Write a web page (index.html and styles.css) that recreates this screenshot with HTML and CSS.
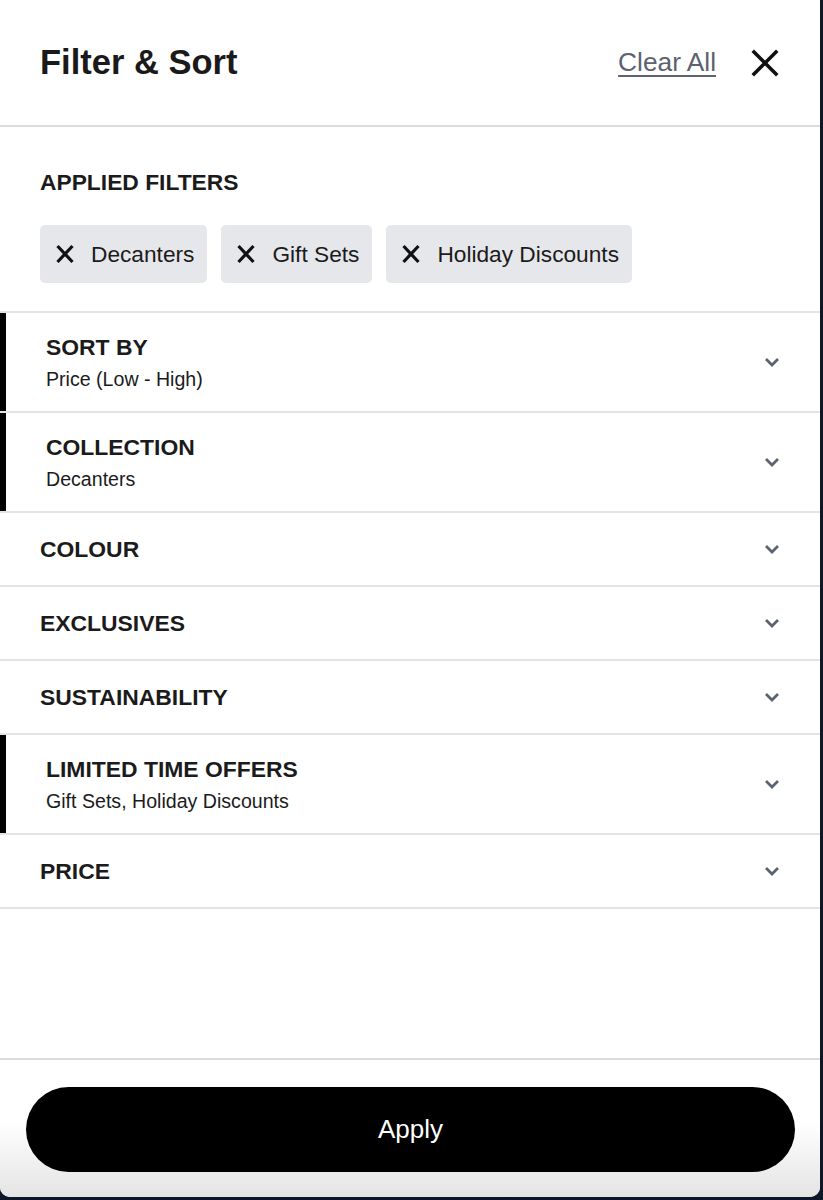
FILE: index.html
```html
<!DOCTYPE html>
<html lang="en">
<head>
    <meta charset="UTF-8">
    <meta name="viewport" content="width=device-width, initial-scale=1.0">
    <title>Filter &amp; Sort</title>
    <link rel="stylesheet" href="styles.css">
</head>
<body>
    <div class="panel">
        <header class="panel-header">
            <h1>Filter &amp; Sort</h1>
            <div class="header-actions">
                <a href="#" class="clear-all">Clear All</a>
                <button class="close-btn" aria-label="Close">
                    <svg width="28" height="28" viewBox="0 0 28 28">
                        <path d="M3 3 L25 25 M25 3 L3 25" stroke="#111" stroke-width="3.6" stroke-linecap="square" fill="none"/>
                    </svg>
                </button>
            </div>
        </header>

        <section class="applied">
            <h2>APPLIED FILTERS</h2>
            <div class="chips">
                <!-- Applied filter chips -->
                <button class="chip">
                    <svg width="20" height="20" viewBox="0 0 20 20"><path d="M2.5 2 L17.5 18 M17.5 2 L2.5 18" stroke="#111" stroke-width="3.2" fill="none"/></svg>
                    Decanters
                </button>
                <button class="chip">
                    <svg width="20" height="20" viewBox="0 0 20 20"><path d="M2.5 2 L17.5 18 M17.5 2 L2.5 18" stroke="#111" stroke-width="3.2" fill="none"/></svg>
                    Gift Sets
                </button>
                <button class="chip">
                    <svg width="20" height="20" viewBox="0 0 20 20"><path d="M2.5 2 L17.5 18 M17.5 2 L2.5 18" stroke="#111" stroke-width="3.2" fill="none"/></svg>
                    Holiday Discounts
                </button>
            </div>
        </section>

        <ul class="filter-list">
            <li class="filter-row active">
                <div class="filter-text">
                    <div class="filter-title">SORT BY</div>
                    <div class="filter-value">Price (Low - High)</div>
                </div>
                <svg class="chevron" width="16" height="10" viewBox="0 0 16 10"><path d="M2 2 L8 8 L14 2" stroke="#5b6270" stroke-width="2.8" fill="none"/></svg>
            </li>
            <li class="filter-row active">
                <div class="filter-text">
                    <div class="filter-title">COLLECTION</div>
                    <div class="filter-value">Decanters</div>
                </div>
                <svg class="chevron" width="16" height="10" viewBox="0 0 16 10"><path d="M2 2 L8 8 L14 2" stroke="#5b6270" stroke-width="2.8" fill="none"/></svg>
            </li>
            <li class="filter-row">
                <div class="filter-title">COLOUR</div>
                <svg class="chevron" width="16" height="10" viewBox="0 0 16 10"><path d="M2 2 L8 8 L14 2" stroke="#5b6270" stroke-width="2.8" fill="none"/></svg>
            </li>
            <li class="filter-row">
                <div class="filter-title">EXCLUSIVES</div>
                <svg class="chevron" width="16" height="10" viewBox="0 0 16 10"><path d="M2 2 L8 8 L14 2" stroke="#5b6270" stroke-width="2.8" fill="none"/></svg>
            </li>
            <li class="filter-row">
                <div class="filter-title">SUSTAINABILITY</div>
                <svg class="chevron" width="16" height="10" viewBox="0 0 16 10"><path d="M2 2 L8 8 L14 2" stroke="#5b6270" stroke-width="2.8" fill="none"/></svg>
            </li>
            <li class="filter-row active">
                <div class="filter-text">
                    <div class="filter-title">LIMITED TIME OFFERS</div>
                    <div class="filter-value">Gift Sets, Holiday Discounts</div>
                </div>
                <svg class="chevron" width="16" height="10" viewBox="0 0 16 10"><path d="M2 2 L8 8 L14 2" stroke="#5b6270" stroke-width="2.8" fill="none"/></svg>
            </li>
            <li class="filter-row">
                <div class="filter-title">PRICE</div>
                <svg class="chevron" width="16" height="10" viewBox="0 0 16 10"><path d="M2 2 L8 8 L14 2" stroke="#5b6270" stroke-width="2.8" fill="none"/></svg>
            </li>
        </ul>

        <footer class="panel-footer">
            <button class="apply-button">Apply</button>
        </footer>
    </div>
</body>
</html>
```

FILE: styles.css
```css
/* Global Styling */
body {
    margin: 0;
    padding: 0;
    font-family: "Liberation Sans", Arial, sans-serif;
    background-color: #0d1727; /* Page behind the drawer */
    color: #1b1b1b;
}

.panel {
    width: 820px;
    height: 1197px;
    background-color: #fff;
    border-radius: 0 0 10px 10px;
    overflow: hidden;
    display: flex;
    flex-direction: column;
}

/* Header */
.panel-header {
    height: 125px;
    padding: 0 41px 0 40px;
    display: flex;
    align-items: center;
    justify-content: space-between;
    border-bottom: 2px solid #dcdcdc;
}

.panel-header h1 {
    margin: 0;
    font-size: 34.5px;
    font-weight: bold;
    color: #1a1a1a;
}

.header-actions {
    display: flex;
    align-items: center;
    gap: 35px;
}

.clear-all {
    font-size: 26.3px;
    color: #5b6270;
    text-decoration: underline;
    text-decoration-thickness: 2px;
    text-underline-offset: 4px;
}

.close-btn {
    padding: 0;
    border: none;
    background: none;
    display: flex;
    cursor: pointer;
}

/* Applied filters */
.applied {
    padding: 43px 40px 28px;
    border-bottom: 2px solid #e4e4e4;
}

.applied h2 {
    margin: 0 0 30px;
    font-size: 22.8px;
    line-height: 25px;
    font-weight: bold;
}

.chips {
    display: flex;
    gap: 14px;
}

.chip {
    height: 58px;
    padding: 0 13px 0 15px;
    display: flex;
    align-items: center;
    gap: 16px;
    background-color: #e6e7ea;
    border: none;
    border-radius: 5px;
    font-family: inherit;
    font-size: 22.7px;
    color: #1b1b1b;
    cursor: pointer;
}

/* Filter rows */
.filter-list {
    list-style: none;
    margin: 0;
    padding: 0;
}

.filter-row {
    padding: 23px 40px;
    display: flex;
    align-items: center;
    justify-content: space-between;
    border-bottom: 2px solid #e4e4e4;
    cursor: pointer;
}

.filter-row.active {
    padding: 21px 40px 21px 46px;
    box-shadow: inset 6px 0 0 #000; /* Black marker for rows with a value */
}

.filter-title {
    font-size: 22.9px;
    line-height: 26px;
    font-weight: bold;
}

.filter-value {
    margin-top: 8px;
    font-size: 19.6px;
    line-height: 22px;
}

.chevron {
    flex-shrink: 0;
}

/* Footer */
.panel-footer {
    margin-top: auto;
    padding: 27px 25px 25px 26px;
    border-top: 2px solid #dcdcdc;
    background: linear-gradient(#fff 45%, #e4e4e4);
}

.apply-button {
    width: 100%;
    height: 85px;
    background-color: #000;
    color: #fff;
    border: none;
    border-radius: 43px;
    font-family: inherit;
    font-size: 26px;
    cursor: pointer;
}
```
